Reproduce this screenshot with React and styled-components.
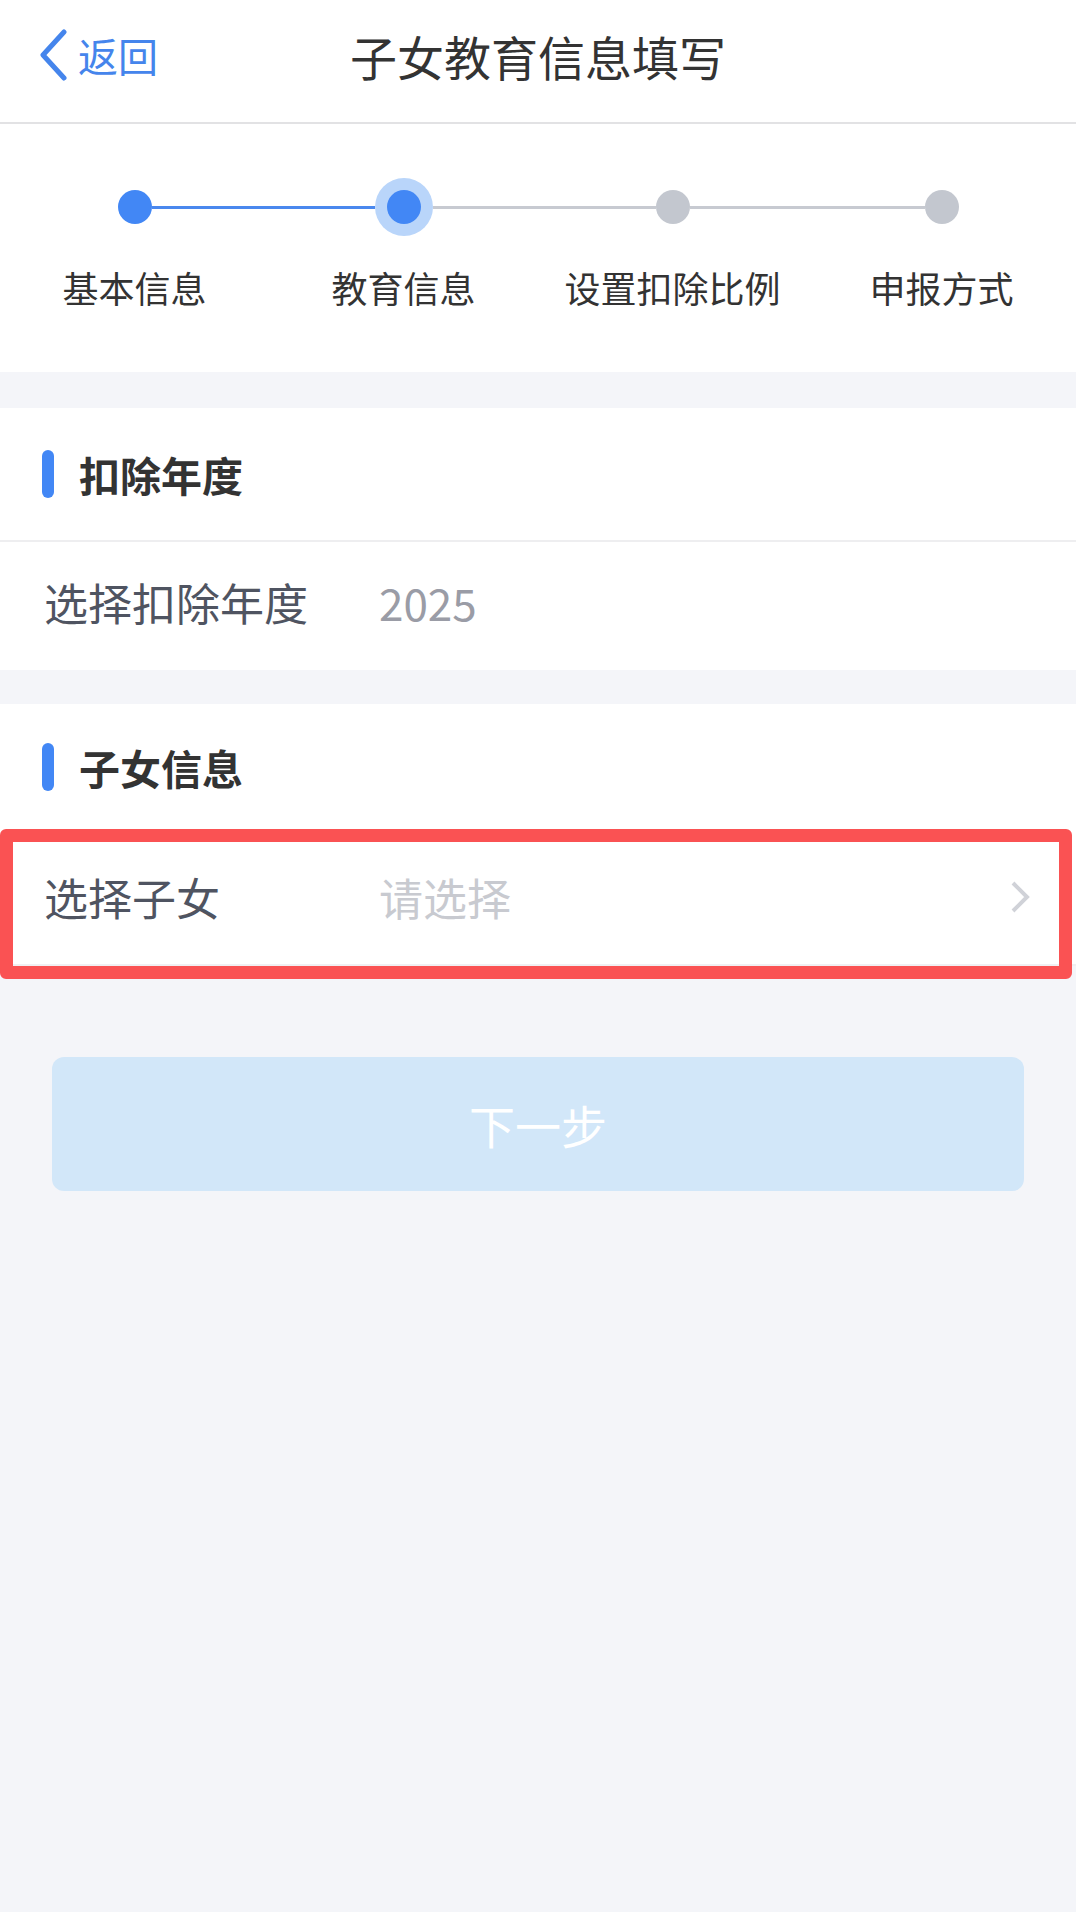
import styled, { createGlobalStyle } from "styled-components";

const GlobalStyle = createGlobalStyle`
  html, body {
    margin: 0;
    padding: 0;
    background: #f4f5f9;
    font-family: "Noto Sans CJK SC", "Noto Sans", sans-serif;
  }
  * { box-sizing: border-box; }
`;

const Page = styled.div`
  min-height: 1912px;
  background: #f4f5f9;
`;

const NavBar = styled.header`
  height: 124px;
  background: #fff;
  border-bottom: 2px solid #e2e2e4;
  display: grid;
  grid-template-columns: 1fr auto 1fr;
  align-items: center;
  padding-bottom: 12px;
`;

const Back = styled.div`
  display: flex;
  align-items: center;
  gap: 10px;
  padding-left: 38px;
  color: #4585ec;
  font-size: 40px;
`;

const Title = styled.h1`
  margin: 0;
  font-size: 47px;
  font-weight: 400;
  color: #333;
`;

const StepPanel = styled.section`
  background: #fff;
  display: grid;
  grid-template-columns: repeat(4, 1fr);
  padding: 54px 0 63px;
`;

const Step = styled.div`
  display: flex;
  flex-direction: column;
  align-items: center;
  gap: 30px;
`;

const Track = styled.div`
  width: 100%;
  height: 58px;
  display: flex;
  align-items: center;
`;

const HalfLine = styled.div`
  flex: 1;
  height: 3px;
  background: ${(p) => (p.$off ? "transparent" : p.$done ? "#4a88ee" : "#c7cad1")};
`;

const Dot = styled.div`
  width: ${(p) => (p.$current ? "58px" : "34px")};
  height: ${(p) => (p.$current ? "58px" : "34px")};
  border-radius: 50%;
  display: flex;
  align-items: center;
  justify-content: center;
  background: ${(p) => (p.$current ? "#b9d5fa" : "transparent")};

  &::after {
    content: "";
    width: 34px;
    height: 34px;
    border-radius: 50%;
    background: ${(p) => (p.$active ? "#4287f5" : "#c3c7cf")};
  }
`;

const StepLabel = styled.div`
  font-size: 36px;
  line-height: 43px;
  color: #333;
  white-space: nowrap;
`;

const Card = styled.section`
  background: #fff;
  margin-top: ${(p) => p.$gap}px;
`;

const CardHead = styled.div`
  height: ${(p) => p.$h}px;
  display: flex;
  align-items: center;
  gap: 25px;
  padding-left: 42px;
  border-bottom: ${(p) => (p.$line ? "2px solid #eeeef0" : "none")};
`;

const Bar = styled.span`
  width: 12px;
  height: 48px;
  border-radius: 6px;
  background: #4287f5;
`;

const CardTitle = styled.h2`
  margin: 0;
  font-size: 41px;
  font-weight: 700;
  color: #333;
`;

const Row = styled.div`
  position: relative;
  height: ${(p) => p.$h}px;
  display: flex;
  align-items: center;
  padding: 0 46px ${(p) => p.$lift || 0}px 44px;
  border-bottom: ${(p) => (p.$line ? "2px solid #f0f0f2" : "none")};

  ${(p) =>
    p.$marked &&
    `
    &::after {
      content: "";
      position: absolute;
      top: -1px;
      left: 0;
      right: 4px;
      bottom: -15px;
      border: 13px solid #fa5253;
      border-radius: 6px;
      pointer-events: none;
    }
  `}
`;

const RowLabel = styled.span`
  width: 335px;
  font-size: 44px;
  color: #4f5461;
`;

const RowValue = styled.span`
  flex: 1;
  font-size: 44px;
  color: ${(p) => (p.$empty ? "#c8cad0" : "#9a9ca6")};
`;

const NextButton = styled.button`
  display: block;
  width: calc(100% - 104px);
  height: 134px;
  margin: 91px auto 0;
  border: 0;
  border-radius: 12px;
  background: #d2e7f9;
  color: #fff;
  font-family: inherit;
  font-size: 46px;
  cursor: pointer;
`;

const steps = ["基本信息", "教育信息", "设置扣除比例", "申报方式"];
const current = 1;

function App() {
  return (
    <Page>
      <GlobalStyle />
      <NavBar>
        <Back>
          <svg width="30" height="52" viewBox="0 0 30 52">
            <path d="M26 3 L5 26 L26 49" fill="none" stroke="#4585ec" strokeWidth="5" strokeLinecap="round" strokeLinejoin="round" />
          </svg>
          返回
        </Back>
        <Title>子女教育信息填写</Title>
        <div />
      </NavBar>

      <StepPanel>
        {steps.map((s, i) => (
          <Step key={s}>
            <Track>
              <HalfLine $off={i === 0} $done={i <= current} />
              <Dot $active={i <= current} $current={i === current} />
              <HalfLine $off={i === steps.length - 1} $done={i < current} />
            </Track>
            <StepLabel>{s}</StepLabel>
          </Step>
        ))}
      </StepPanel>

      <Card $gap={36}>
        <CardHead $h={134} $line>
          <Bar />
          <CardTitle>扣除年度</CardTitle>
        </CardHead>
        <Row $h={128} $lift={8}>
          <RowLabel>选择扣除年度</RowLabel>
          <RowValue>2025</RowValue>
        </Row>
      </Card>

      <Card $gap={34}>
        <CardHead $h={126}>
          <Bar />
          <CardTitle>子女信息</CardTitle>
        </CardHead>
        <Row $h={136} $line $marked>
          <RowLabel>选择子女</RowLabel>
          <RowValue $empty>请选择</RowValue>
          <svg width="20" height="32" viewBox="0 0 20 32">
            <path d="M3 2 L17 16 L3 30" fill="none" stroke="#d0d2d8" strokeWidth="4" />
          </svg>
        </Row>
      </Card>

      <NextButton>下一步</NextButton>
    </Page>
  );
}

export default App;
